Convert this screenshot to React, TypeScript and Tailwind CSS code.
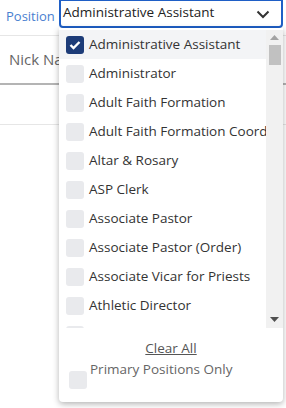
const positions = [
  'Administrative Assistant',
  'Administrator',
  'Adult Faith Formation',
  'Adult Faith Formation Coordinator',
  'Altar & Rosary',
  'ASP Clerk',
  'Associate Pastor',
  'Associate Pastor (Order)',
  'Associate Vicar for Priests',
  'Athletic Director',
  'Bookkeeper',
];

const font = { fontFamily: '"Open Sans", "Noto Sans", sans-serif' };

const Check = ({ checked }: { checked?: boolean }) =>
  checked ? (
    <div className="flex h-[18px] w-[18px] shrink-0 items-center justify-center rounded-[3px] bg-[#1d3c78]">
      <svg width="12" height="10" viewBox="0 0 12 10">
        <polyline points="1.5,5 4.5,8 10.5,2" fill="none" stroke="white" strokeWidth="2.4" />
      </svg>
    </div>
  ) : (
    <div className="h-[18px] w-[18px] shrink-0 rounded-[3px] bg-[#e9eaed]" />
  );

export default function App() {
  return (
    <div className="relative h-[408px] w-[286px] overflow-hidden bg-white text-[#333]" style={font}>
      <div className="flex h-[36px] items-start border-b border-[#e6e6e6]">
        <span className="mt-[7px] w-[59px] shrink-0 whitespace-nowrap pl-[6px] text-[13px] text-[#4a7fd0]">Position</span>
        <div className="mt-[-1px] flex h-[29px] w-[224px] items-center justify-between rounded-b-[4px] border-2 border-[#1f5fc6] pb-[2px] pl-[2px] pr-[11px]">
          <span className="whitespace-nowrap text-[13.5px] leading-none text-[#222]">Administrative Assistant</span>
          <svg className="mt-[3px]" width="14" height="9" viewBox="0 0 14 9">
            <polyline points="1.5,1.5 7,7 12.5,1.5" fill="none" stroke="#333" strokeWidth="2" />
          </svg>
        </div>
      </div>
      <div className="flex h-[49px] items-center border-b-2 border-[#b4b4b4] pl-[9px]">
        <span className="text-[15px] text-[#666]">Nick Name</span>
      </div>
      <div className="h-[40px] border-b border-[#e6e6e6]" />

      <div className="absolute left-[59px] top-[28px] flex h-[374px] w-[224px] flex-col rounded-b-[4px] bg-white shadow-[0_2px_6px_rgba(0,0,0,0.3)]">
        <div className="mt-[2px] flex h-[298px]">
          <div className="flex-1 overflow-hidden">
            {positions.map((p, i) => (
              <div
                key={p}
                className={`flex h-[29px] items-center gap-[5px] pl-[7px] ${i === 0 ? 'bg-[#f3f4f6]' : ''}`}
              >
                <Check checked={i === 0} />
                <span className="whitespace-nowrap text-[13.5px]">{p}</span>
              </div>
            ))}
          </div>
          <div className="flex w-[17px] flex-col items-center bg-[#f1f1f1]">
            <svg className="mt-[5px]" width="9" height="5" viewBox="0 0 9 5">
              <polygon points="0,5 9,5 4.5,0" fill="#a3a3a3" />
            </svg>
            <div className="mt-[5px] h-[20px] w-[12px] bg-[#c1c1c1]" />
            <div className="flex-1" />
            <svg className="mb-[6px]" width="9" height="5" viewBox="0 0 9 5">
              <polygon points="0,0 9,0 4.5,5" fill="#505050" />
            </svg>
          </div>
        </div>
        <div className="mt-[10px] text-center text-[13.5px] text-[#555] underline">Clear All</div>
        <div className="mt-[1px] flex items-start gap-[3px] pl-[10px]">
          <div className="mt-[12px]">
            <Check />
          </div>
          <span className="text-[13.5px] text-[#666]">Primary Positions Only</span>
        </div>
      </div>
    </div>
  );
}
